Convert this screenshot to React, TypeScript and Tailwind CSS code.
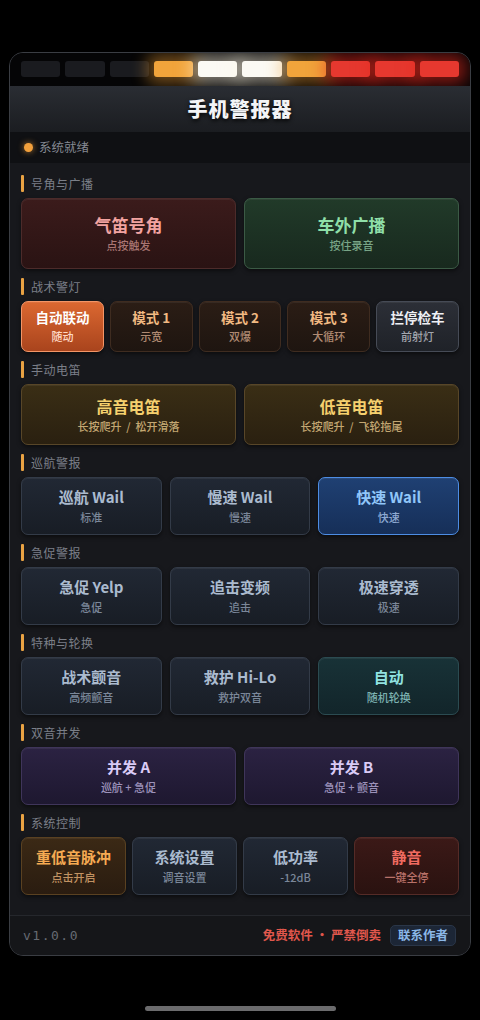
import React from 'react';

type Tone = {
  box: string;
  title: string;
  sub: string;
};

const tones: Record<string, Tone> = {
  horn: {
    box: 'bg-gradient-to-b from-[#3b1b1b] to-[#2a1313] border-[#4c2b2a]',
    title: 'text-[#f2a3a0]',
    sub: 'text-[#a97572]',
  },
  broadcast: {
    box: 'bg-gradient-to-b from-[#213a29] to-[#18291e] border-[#3b5a45]',
    title: 'text-[#8fdfa8]',
    sub: 'text-[#78a486]',
  },
  autoOn: {
    box: 'bg-gradient-to-b from-[#dc6831] to-[#a9441d] border-[#f39566] shadow-[0_0_16px_rgba(230,100,40,0.45)]',
    title: 'text-white',
    sub: 'text-[#ffd9c6]',
  },
  mode: {
    box: 'bg-gradient-to-b from-[#2b1d15] to-[#1e1510] border-[#3f2c20]',
    title: 'text-[#f1b982]',
    sub: 'text-[#b08a72]',
  },
  stop: {
    box: 'bg-gradient-to-b from-[#2c2f37] to-[#1f2228] border-[#464b56]',
    title: 'text-[#eef0f4]',
    sub: 'text-[#a2a6ae]',
  },
  manual: {
    box: 'bg-gradient-to-b from-[#3a2e15] to-[#2a2010] border-[#584628]',
    title: 'text-[#f5d06e]',
    sub: 'text-[#c3a772]',
  },
  slate: {
    box: 'bg-gradient-to-b from-[#212834] to-[#181d25] border-[#333b48]',
    title: 'text-[#abbbcf]',
    sub: 'text-[#7b8799]',
  },
  fast: {
    box: 'bg-gradient-to-b from-[#1f4073] to-[#162f58] border-[#4d8de4] shadow-[0_0_18px_rgba(60,140,255,0.45)]',
    title: 'text-[#90c6f9]',
    sub: 'text-[#8eaad2]',
  },
  teal: {
    box: 'bg-gradient-to-b from-[#183237] to-[#12252a] border-[#2b4b51]',
    title: 'text-[#90e2e0]',
    sub: 'text-[#7cb1b0]',
  },
  purple: {
    box: 'bg-gradient-to-b from-[#2b2242] to-[#1e1830] border-[#3f355a]',
    title: 'text-[#dacbf6]',
    sub: 'text-[#9c92ba]',
  },
  bass: {
    box: 'bg-gradient-to-b from-[#3b2915] to-[#2a1c10] border-[#5a4121]',
    title: 'text-[#f5aa52]',
    sub: 'text-[#c19262]',
  },
  mute: {
    box: 'bg-gradient-to-b from-[#3b1917] to-[#2a1210] border-[#552b27]',
    title: 'text-[#f06b61]',
    sub: 'text-[#b87169]',
  },
};

const Pad = ({
  title,
  sub,
  tone,
  h,
  size,
}: {
  title: string;
  sub: string;
  tone: Tone;
  h: string;
  size: string;
}) => (
  <button
    className={`flex flex-col items-center justify-center rounded-[7px] border ${tone.box} ${h} shadow-[inset_0_1px_0_rgba(255,255,255,0.06),0_2px_4px_rgba(0,0,0,0.5)]`}
  >
    <span className={`font-bold leading-tight ${size} ${tone.title}`}>{title}</span>
    <span className={`text-[11px] font-medium leading-tight mt-[4px] whitespace-pre ${tone.sub}`}>{sub}</span>
  </button>
);

const Section = ({ label, children }: { label: string; children: React.ReactNode }) => (
  <div>
    <div className="flex items-center gap-[7px] h-[17px] mb-[6px]">
      <span className="w-[3px] h-[17px] rounded-[1px] bg-[#e9a243]" />
      <span className="text-[12px] text-[#7b7f88] tracking-[0.5px]">{label}</span>
    </div>
    {children}
  </div>
);

const lights = ['off', 'off', 'off', 'amber', 'white', 'white', 'amber', 'red', 'red', 'red'];

const lightClass: Record<string, string> = {
  off: 'bg-[#1a1b1f]',
  amber: 'bg-[#f1a43b] shadow-[0_0_16px_7px_rgba(242,160,50,0.45)]',
  white: 'bg-[#fbfaf4] shadow-[0_0_16px_7px_rgba(255,250,230,0.5)]',
  red: 'bg-[#e6382f] shadow-[0_0_16px_7px_rgba(230,40,30,0.55)]',
};

export default function App() {
  return (
    <div className="min-h-screen bg-black pt-[52px] font-['Noto_Sans_CJK_SC','Noto_Sans',sans-serif]">
      <div className="mx-[9px] w-[462px] rounded-[14px] border border-[#3a3d43] bg-[#17181c] overflow-hidden shadow-[0_10px_30px_rgba(0,0,0,0.8)]">
        {/* light bar */}
        <div className="bg-[#050506] px-[11px] pt-[8px] pb-[9px] overflow-hidden">
          <div className="grid grid-cols-10 gap-[5px]">
            {lights.map((l, i) => (
              <div key={i} className={`h-[16px] rounded-[3px] ${lightClass[l]}`} />
            ))}
          </div>
        </div>

        {/* title */}
        <div className="h-[46px] flex items-center justify-center bg-gradient-to-b from-[#2a2d33] to-[#1b1d21]">
          <h1 className="text-[20px] font-black text-[#f3f4f6] tracking-[1px] [text-shadow:0_2px_4px_rgba(0,0,0,0.9)]">
            手机警报器
          </h1>
        </div>

        {/* status */}
        <div className="h-[31px] flex items-center gap-[6px] px-[14px] bg-[#0f1013]">
          <span className="w-[9px] h-[9px] rounded-full bg-[#f2a03c] shadow-[0_0_6px_rgba(242,160,60,0.7)]" />
          <span className="text-[12.5px] text-[#858992]">系统就绪</span>
        </div>

        {/* controls */}
        <div className="flex flex-col gap-[9px] px-[11px] pt-[12px] pb-[20px]">
          <Section label="号角与广播">
            <div className="grid grid-cols-2 gap-2">
              <Pad title="气笛号角" sub="点按触发" tone={tones.horn} h="h-[71px]" size="text-[17px]" />
              <Pad title="车外广播" sub="按住录音" tone={tones.broadcast} h="h-[71px]" size="text-[17px]" />
            </div>
          </Section>

          <Section label="战术警灯">
            <div className="grid grid-cols-5 gap-[6px]">
              <Pad title="自动联动" sub="随动" tone={tones.autoOn} h="h-[51px]" size="text-[13.5px]" />
              <Pad title="模式 1" sub="示宽" tone={tones.mode} h="h-[51px]" size="text-[13.5px]" />
              <Pad title="模式 2" sub="双爆" tone={tones.mode} h="h-[51px]" size="text-[13.5px]" />
              <Pad title="模式 3" sub="大循环" tone={tones.mode} h="h-[51px]" size="text-[13.5px]" />
              <Pad title="拦停检车" sub="前射灯" tone={tones.stop} h="h-[51px]" size="text-[13.5px]" />
            </div>
          </Section>

          <Section label="手动电笛">
            <div className="grid grid-cols-2 gap-2">
              <Pad title="高音电笛" sub="长按爬升  /  松开滑落" tone={tones.manual} h="h-[61px]" size="text-[16px]" />
              <Pad title="低音电笛" sub="长按爬升  /  飞轮拖尾" tone={tones.manual} h="h-[61px]" size="text-[16px]" />
            </div>
          </Section>

          <Section label="巡航警报">
            <div className="grid grid-cols-3 gap-2">
              <Pad title="巡航 Wail" sub="标准" tone={tones.slate} h="h-[58px]" size="text-[15px]" />
              <Pad title="慢速 Wail" sub="慢速" tone={tones.slate} h="h-[58px]" size="text-[15px]" />
              <Pad title="快速 Wail" sub="快速" tone={tones.fast} h="h-[58px]" size="text-[15px]" />
            </div>
          </Section>

          <Section label="急促警报">
            <div className="grid grid-cols-3 gap-2">
              <Pad title="急促 Yelp" sub="急促" tone={tones.slate} h="h-[58px]" size="text-[15px]" />
              <Pad title="追击变频" sub="追击" tone={tones.slate} h="h-[58px]" size="text-[15px]" />
              <Pad title="极速穿透" sub="极速" tone={tones.slate} h="h-[58px]" size="text-[15px]" />
            </div>
          </Section>

          <Section label="特种与轮换">
            <div className="grid grid-cols-3 gap-2">
              <Pad title="战术颤音" sub="高频颤音" tone={tones.slate} h="h-[58px]" size="text-[15px]" />
              <Pad title="救护 Hi-Lo" sub="救护双音" tone={tones.slate} h="h-[58px]" size="text-[15px]" />
              <Pad title="自动" sub="随机轮换" tone={tones.teal} h="h-[58px]" size="text-[15px]" />
            </div>
          </Section>

          <Section label="双音并发">
            <div className="grid grid-cols-2 gap-2">
              <Pad title="并发 A" sub="巡航 + 急促" tone={tones.purple} h="h-[58px]" size="text-[15px]" />
              <Pad title="并发 B" sub="急促 + 颤音" tone={tones.purple} h="h-[58px]" size="text-[15px]" />
            </div>
          </Section>

          <Section label="系统控制">
            <div className="grid grid-cols-4 gap-[6px]">
              <Pad title="重低音脉冲" sub="点击开启" tone={tones.bass} h="h-[58px]" size="text-[15px]" />
              <Pad title="系统设置" sub="调音设置" tone={tones.slate} h="h-[58px]" size="text-[15px]" />
              <Pad title="低功率" sub="-12dB" tone={tones.slate} h="h-[58px]" size="text-[15px]" />
              <Pad title="静音" sub="一键全停" tone={tones.mute} h="h-[58px]" size="text-[15px]" />
            </div>
          </Section>
        </div>

        {/* footer */}
        <div className="h-[40px] flex items-center justify-between pl-[13px] pr-[14px] border-t border-[#25272c] bg-[#151619]">
          <span className="font-['DejaVu_Sans_Mono',monospace] text-[13px] text-[#666a72] tracking-[1.5px]">v1.0.0</span>
          <div className="flex items-center gap-[9px]">
            <span className="text-[12.5px] font-bold text-[#e0574c]">免费软件 · 严禁倒卖</span>
            <button className="h-[21px] px-[7px] rounded-[5px] bg-[#1c2636] border border-[#2a3648] text-[12.5px] font-bold text-[#8bb8e8] leading-none">
              联系作者
            </button>
          </div>
        </div>
      </div>

      <div className="mt-[50px] mx-auto w-[191px] h-[5px] rounded-full bg-[#6b6b6d]" />
    </div>
  );
}
